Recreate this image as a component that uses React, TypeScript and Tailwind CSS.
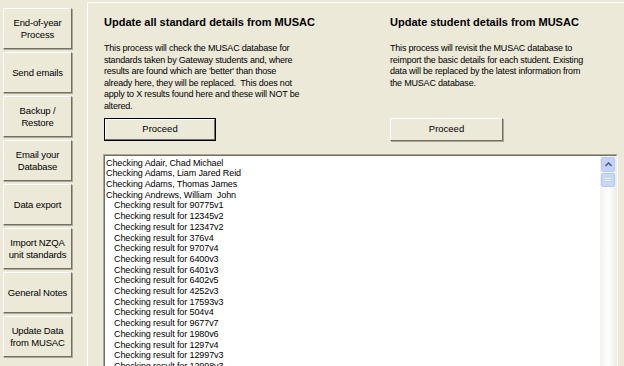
import React from 'react';

const sideButtons = [
  ['End-of-year', 'Process'],
  ['Send emails'],
  ['Backup /', 'Restore'],
  ['Email your', 'Database'],
  ['Data export'],
  ['Import NZQA', 'unit standards'],
  ['General Notes'],
  ['Update Data', 'from MUSAC'],
];

const leftText = [
  'This process will check the MUSAC database for',
  'standards taken by Gateway students and, where',
  "results are found which are 'better' than those",
  'already here, they will be replaced.\u00a0 This does not',
  'apply to X results found here and these will NOT be',
  'altered.',
];

const rightText = [
  'This process will revisit the MUSAC database to',
  'reimport the basic details for each student. Existing',
  'data will be replaced by the latest information from',
  'the MUSAC database.',
];

const names = [
  'Adair, Chad Michael',
  'Adams, Liam Jared Reid',
  'Adams, Thomas James',
  'Andrews, William\u00a0 John',
];

const results = [
  '90775v1', '12345v2', '12347v2', '376v4', '9707v4', '6400v3', '6401v3', '6402v5',
  '4252v3', '17593v3', '504v4', '9677v7', '1980v6', '1297v4', '12997v3', '12998v3',
];

const SideButton = ({ lines }: { lines: string[] }) => (
  <button className="w-[69px] h-[41px] bg-[#ECE9D8] border border-t-white border-l-white border-r-[#716F64] border-b-[#716F64] shadow-[1px_1px_0_#ACA899] flex flex-col items-center justify-center text-[9.5px] leading-[11.5px] tracking-[-0.15px] text-black">
    {lines.map((l) => (
      <span key={l}>{l}</span>
    ))}
  </button>
);

const Proceed = ({ focused }: { focused?: boolean }) => (
  <button
    className={
      focused
        ? 'w-[112px] h-[23px] border border-black bg-[#ECE9D8] p-0'
        : 'w-[113px] h-[23px] bg-[#ECE9D8] border border-t-white border-l-white border-r-[#716F64] border-b-[#716F64] shadow-[1px_1px_0_#ACA899] text-[9.5px]'
    }
  >
    {focused ? (
      <div className="w-full h-full border border-t-white border-l-white border-r-[#716F64] border-b-[#716F64] flex items-center justify-center text-[9.5px]">
        Proceed
      </div>
    ) : (
      'Proceed'
    )}
  </button>
);

const Para = ({ lines }: { lines: string[] }) => (
  <div className="mt-[13px] h-[70px] text-[9px] leading-[11.6px] tracking-[-0.2px] whitespace-nowrap">
    {lines.map((l) => (
      <div key={l}>{l}</div>
    ))}
  </div>
);

const App = () => {
  return (
    <div className="w-[624px] h-[366px] bg-[#ECE9D8] flex overflow-hidden text-black [font-family:'Liberation_Sans',Arial,sans-serif]">
      <div className="w-[87px] shrink-0 flex flex-col gap-[3px] pl-[3px] pt-[8px]">
        {sideButtons.map((b) => (
          <SideButton key={b[0]} lines={b} />
        ))}
      </div>

      <div className="flex-1 mt-[2px] border-t border-l border-t-white border-l-white flex flex-col">
        <div className="flex pt-[12px]">
          <div className="w-[302px] shrink-0 pl-[16px]">
            <h2 className="text-[11px] font-bold leading-[15px]">Update all standard details from MUSAC</h2>
            <Para lines={leftText} />
            <div className="mt-[2px]">
              <Proceed focused />
            </div>
          </div>
          <div className="flex-1">
            <h2 className="text-[11px] font-bold leading-[15px]">Update student details from MUSAC</h2>
            <Para lines={rightText} />
            <div className="mt-[2px]">
              <Proceed />
            </div>
          </div>
        </div>

        <div className="ml-[15px] mr-[6px] mt-[13px] flex-1 flex border border-t-[#ACA899] border-l-[#ACA899] border-r-white border-b-white">
          <div className="flex-1 flex border border-t-[#716F64] border-l-[#716F64] border-r-[#F1EFE2] border-b-[#F1EFE2] bg-white">
            <div className="flex-1 pt-[2px] pl-[1px] text-[9px] leading-[10.7px] tracking-[-0.1px] overflow-hidden">
              {names.map((n) => (
                <div key={n}>Checking {n}</div>
              ))}
              {results.map((r) => (
                <div key={r} className="pl-[8px]">
                  Checking result for {r}
                </div>
              ))}
            </div>
            <div className="w-[16px] flex flex-col bg-gradient-to-r from-[#F3F1EC] via-white to-[#EEEDE5]">
              <div className="h-[15px] m-[1px] rounded-[2px] bg-[#C3D3FD] border border-[#B6C8F7] flex items-center justify-center">
                <svg width="7" height="5" viewBox="0 0 7 5">
                  <path d="M0.5 4 L3.5 1 L6.5 4" stroke="#4D6185" strokeWidth="1.6" fill="none" />
                </svg>
              </div>
              <div className="h-[14px] mx-[1px] rounded-[2px] bg-[#C8D6FB] border border-[#B6C8F7] flex flex-col items-center justify-center gap-[1px]">
                <div className="w-[6px] h-px bg-[#E8EEFD]" />
                <div className="w-[6px] h-px bg-[#E8EEFD]" />
              </div>
            </div>
          </div>
        </div>
      </div>
    </div>
  );
};

export default App;
